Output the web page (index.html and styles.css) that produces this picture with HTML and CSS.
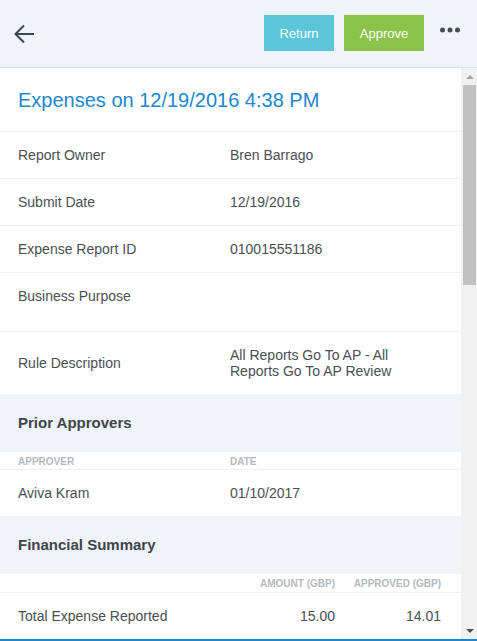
FILE: index.html
```html
<!DOCTYPE html>
<html>
<head>
<meta charset="utf-8">
<link rel="stylesheet" href="styles.css">
</head>
<body>
<div class="app">
  <header class="topbar">
    <svg class="back" width="20" height="20" viewBox="0 0 20 20"><path d="M20 10H1.5M10 1.5L1.5 10L10 18.5" fill="none" stroke="#3d4752" stroke-width="2"/></svg>
    <div class="spacer"></div>
    <button class="btn btn-return">Return</button>
    <button class="btn btn-approve">Approve</button>
    <svg class="more" width="20" height="6" viewBox="0 0 20 6"><circle cx="2.5" cy="3" r="2.5" fill="#454d57"/><circle cx="10" cy="3" r="2.5" fill="#454d57"/><circle cx="17.5" cy="3" r="2.5" fill="#454d57"/></svg>
  </header>
  <div class="main">
    <div class="content">
      <div class="title">Expenses on 12/19/2016 4:38 PM</div>
      <div class="row"><div>Report Owner</div><div>Bren Barrago</div></div>
      <div class="row"><div>Submit Date</div><div>12/19/2016</div></div>
      <div class="row"><div>Expense Report ID</div><div>010015551186</div></div>
      <div class="row row-tall"><div>Business Purpose</div><div></div></div>
      <div class="row row-center row-last"><div>Rule Description</div><div>All Reports Go To AP - All Reports Go To AP Review</div></div>
      <div class="section">Prior Approvers</div>
      <div class="row colhead"><div>Approver</div><div>Date</div></div>
      <div class="row row-last"><div>Aviva Kram</div><div>01/10/2017</div></div>
      <div class="section">Financial Summary</div>
      <div class="frow colhead"><div></div><div class="num">Amount (GBP)</div><div class="num">Approved (GBP)</div></div>
      <div class="frow"><div>Total Expense Reported</div><div class="num">15.00</div><div class="num">14.01</div></div>
    </div>
    <div class="scrollbar">
      <div class="sb-btn"><span class="tri-up"></span></div>
      <div class="sb-thumb"></div>
      <div class="sb-fill"></div>
      <div class="sb-btn"><span class="tri-down"></span></div>
    </div>
  </div>
  <div class="bottomline"></div>
</div>
</body>
</html>
```
FILE: styles.css
```css
* { box-sizing: border-box; }
html, body { margin: 0; padding: 0; }
body {
  font-family: "Liberation Sans", Arial, sans-serif;
  color: #4a4f55;
  background: #fff;
}
.app {
  width: 477px;
  height: 641px;
  display: flex;
  flex-direction: column;
  overflow: hidden;
}
.topbar {
  height: 68px;
  flex: none;
  background: #f0f3f7;
  border-bottom: 1px solid #dde1e5;
  display: flex;
  align-items: center;
  padding: 0 17px 0 14px;
}
.back { display: block; margin-top: 1px; }
.spacer { flex: 1; }
.btn {
  height: 36px;
  border: none;
  color: #fff;
  font-family: "Liberation Sans", Arial, sans-serif;
  font-size: 13px;
  padding: 0;
  margin-top: -1px;
}
.btn-return { width: 70px; background: #5bc5d9; }
.btn-approve { width: 80px; margin-left: 10px; background: #8bc34a; }
.more { display: block; margin-left: 16px; margin-top: -7px; }

.main {
  flex: 1;
  display: flex;
  min-height: 0;
}
.content {
  flex: 1;
  overflow: hidden;
}
.title {
  color: #1d87cf;
  font-size: 20px;
  line-height: 24px;
  padding: 20px 18px 19px;
  border-bottom: 1px solid #eef0f2;
}
.row {
  display: grid;
  grid-template-columns: 212px 1fr;
  padding: 15px 20px 15px 18px;
  font-size: 14px;
  line-height: 16px;
  border-bottom: 1px solid #eef0f2;
}
.row-tall { padding-bottom: 27px; }
.row-center { align-items: center; }
.row-last { border-bottom: none; }
.section {
  background: #f0f3f7;
  font-size: 15px;
  font-weight: bold;
  line-height: 18px;
  padding: 20px 18px 20px;
  color: #3e454d;
}
.colhead {
  font-size: 10px;
  font-weight: bold;
  line-height: 12px;
  padding-top: 4px;
  padding-bottom: 1px;
  text-transform: uppercase;
  color: #b5b9bd;
}
.frow {
  display: grid;
  grid-template-columns: 1fr 110px 106px;
  padding: 15px 20px 15px 18px;
  font-size: 14px;
  line-height: 16px;
}
.frow.colhead {
  font-size: 10px;
  line-height: 12px;
  padding-top: 4px;
  padding-bottom: 2px;
  border-bottom: 1px solid #eef0f2;
}
.num { text-align: right; }

.scrollbar {
  width: 16px;
  flex: none;
  background: #f1f1f1;
  display: flex;
  flex-direction: column;
}
.sb-btn {
  height: 17px;
  display: flex;
  align-items: center;
  justify-content: center;
  padding-left: 1px;
}
.tri-up {
  width: 0; height: 0;
  border-left: 4px solid transparent;
  border-right: 4px solid transparent;
  border-bottom: 4px solid #a3a3a3;
}
.tri-down {
  width: 0; height: 0;
  border-left: 4px solid transparent;
  border-right: 4px solid transparent;
  border-top: 4px solid #505050;
}
.sb-thumb {
  height: 200px;
  margin-left: 2px;
  margin-right: 1px;
  background: #c1c1c1;
}
.sb-fill { flex: 1; }
.bottomline {
  height: 2px;
  flex: none;
  background: #1d87cf;
}
```
